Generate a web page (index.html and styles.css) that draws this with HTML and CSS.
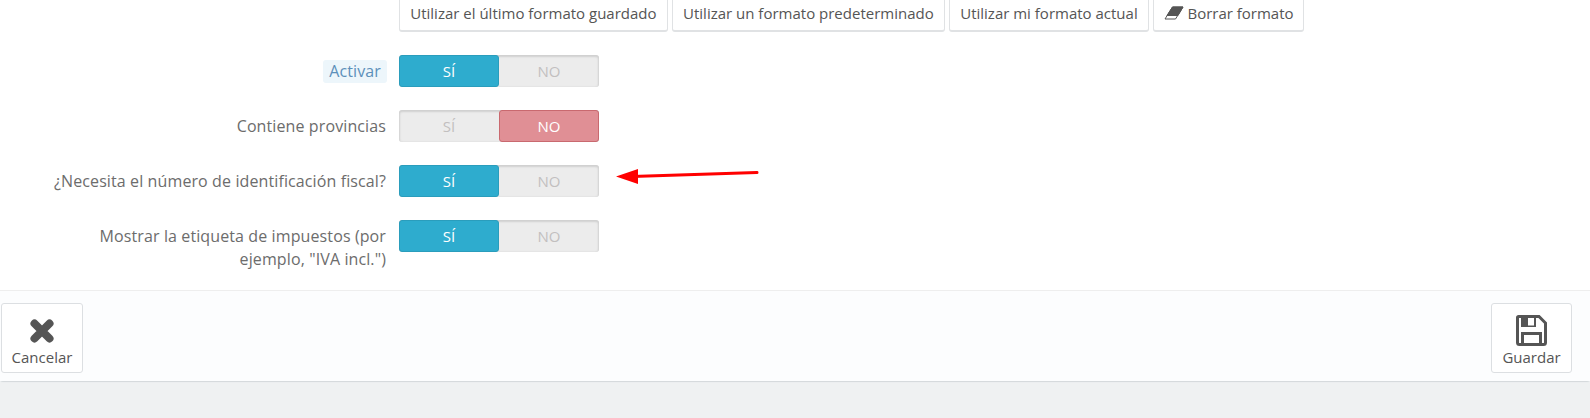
FILE: index.html
```html
<!DOCTYPE html>
<html lang="es">
<head>
<meta charset="utf-8">
<title>Formato</title>
<link rel="stylesheet" href="styles.css">
</head>
<body>
<main class="panel">
  <form class="form">
    <div class="format-row">
      <button type="button" class="btn">Utilizar el último formato guardado</button>
      <button type="button" class="btn">Utilizar un formato predeterminado</button>
      <button type="button" class="btn">Utilizar mi formato actual</button>
      <button type="button" class="btn btn-eraser">
        <svg class="eraser" width="20" height="14" viewBox="0 0 20 14"><path d="M8.500 1H19L11.500 13H1Z" fill="#fff" stroke="#555"/><path d="M8.500 1H19L14 9.500H3Z" fill="#555" stroke="#555"/></svg>
        Borrar formato
      </button>
    </div>
    <div class="row">
      <div class="label"><span class="hint">Activar</span></div>
      <div class="toggle"><span class="opt on-yes">SÍ</span><span class="opt">NO</span></div>
    </div>
    <div class="row">
      <div class="label">Contiene provincias</div>
      <div class="toggle"><span class="opt">SÍ</span><span class="opt on-no">NO</span></div>
    </div>
    <div class="row">
      <div class="label">¿Necesita el número de identificación fiscal?</div>
      <div class="toggle"><span class="opt on-yes">SÍ</span><span class="opt">NO</span></div>
    </div>
    <div class="row">
      <div class="label label-wrap">Mostrar la etiqueta de impuestos (por ejemplo, "IVA incl.")</div>
      <div class="toggle"><span class="opt on-yes">SÍ</span><span class="opt">NO</span></div>
    </div>
  </form>
  <footer class="footer">
    <button type="button" class="action action-wide">
      <svg class="icon-x" width="24" height="24" viewBox="0 0 24 24"><path d="M12 12L4.500 4.500M12 12l7.500-7.500M12 12l7.500 7.500M12 12l-7.500 7.500" stroke="#555" stroke-width="8" stroke-linecap="round" fill="none"/></svg>
      <span>Cancelar</span>
    </button>
    <button type="button" class="action">
      <svg width="31" height="31" viewBox="0 0 31 31"><path d="M2.500 1.500H23L29.500 8V27.500a2 2 0 0 1-2 2H3.500a2 2 0 0 1-2-2V2.500a1 1 0 0 1 1-1Z" fill="none" stroke="#555" stroke-width="3"/><path d="M5 2H20V12H5Z" fill="#555"/><rect x="12" y="3" width="6" height="7.500" fill="#fff"/><path d="M6.500 28V18.500H24.500V28" fill="none" stroke="#555" stroke-width="3"/></svg>
      <span>Guardar</span>
    </button>
  </footer>
</main>
<svg class="arrow" width="150" height="24" viewBox="0 0 150 24"><path d="M145 5.500L20 9.500" stroke="#f00" stroke-width="3" stroke-linecap="round"/><path d="M4 9.500L26 2V17Z" fill="#f00"/></svg>
</body>
</html>
```
FILE: styles.css
```css
* { box-sizing: border-box; }
html, body { height: 100%; }
body {
  margin: 0;
  overflow: hidden;
  background: #eff1f2;
  color: #555;
  font-family: "Open Sans", "Liberation Sans", sans-serif;
  font-size: 15px;
}
.panel {
  background: #fff;
  border-radius: 0 0 3px 3px;
  box-shadow: 0 1px 1px #d3d8db;
}
.form { padding: 0 0 38px 0; }
.format-row {
  display: flex;
  gap: 4px;
  height: 32px;
  margin-left: 399px;
  margin-bottom: 23px;
  align-items: flex-end;
}
.btn {
  height: 42px;
  padding: 5px 10.25px 0;
  flex: none;
  font: inherit;
  color: #555;
  background: #fff;
  border: 1px solid #e0e2e4;
  border-bottom-width: 2px;
  border-radius: 3px;
  display: flex;
  align-items: center;
  gap: 3px;
}
.btn-eraser { padding-left: 11.5px; padding-right: 9.5px; }
.eraser { flex: none; margin-left: -1px; }
.row {
  display: grid;
  grid-template-columns: 387px 200px;
  column-gap: 12px;
  align-items: start;
  margin-bottom: 23px;
}
.row:last-child { margin-bottom: 0; }
.label {
  color: #6c6c6c;
  font-size: 16px;
  letter-spacing: 0.11px;
  text-align: right;
  line-height: 23px;
  padding-top: 5px;
  padding-right: 1px;
}
.label-wrap { padding-left: 90px; margin-bottom: -28px; }
.hint {
  display: inline-block;
  height: 23px;
  margin-right: -1px;
  padding: 0 6px;
  color: #5c90ba;
  background: #edf6fb;
  border-radius: 3px;
}
.toggle {
  display: grid;
  grid-template-columns: 100px 100px;
  height: 32px;
  border-radius: 3px;
  background: #ececec;
  box-shadow: inset 0 1px 2px 1px #d0d0d0;
}
.opt {
  display: flex;
  align-items: center;
  justify-content: center;
  color: #c2bfbf;
  border-radius: 3px;
}
.on-yes {
  color: #fff;
  background: #2eacce;
  border: 1px solid #2a9dbc;
}
.on-no {
  color: #fff;
  background: #e08f95;
  border: 1px solid #c9696f;
}
.footer {
  display: flex;
  justify-content: space-between;
  height: 91px;
  padding: 12px 18px 0 1px;
  background: #fcfdfe;
  border-top: 1px solid #eeeeee;
}
.action {
  width: 81px;
  height: 70px;
  padding: 11px 0 0;
  font: inherit;
  color: #555;
  background: #fff;
  border: 1px solid #dcdfe2;
  border-radius: 3px;
  display: flex;
  flex-direction: column;
  align-items: center;
  justify-content: space-between;
}
.action-wide { width: 82px; }
.icon-x { margin-top: 4px; }
.action span { line-height: 19px; margin-bottom: 5px; }
.arrow { position: absolute; left: 612px; top: 167px; }
```
